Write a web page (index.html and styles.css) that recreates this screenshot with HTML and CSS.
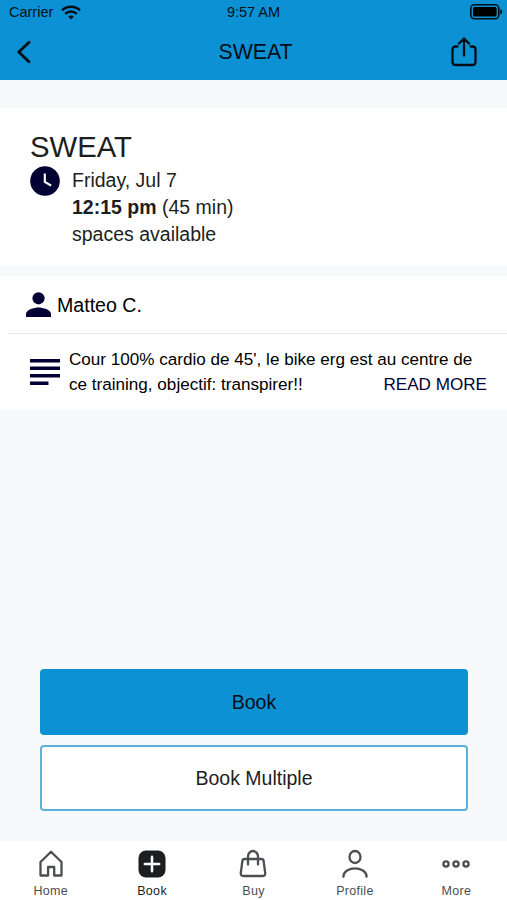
FILE: index.html
```html
<!DOCTYPE html>
<html lang="en">
<head>
    <meta charset="UTF-8">
    <meta name="viewport" content="width=device-width, initial-scale=1.0">
    <title>SWEAT</title>
    <link rel="stylesheet" href="styles.css">
</head>
<body>
    <header class="header">
        <div class="status-bar">
            <div class="carrier">
                <span>Carrier</span>
                <svg width="20" height="15" viewBox="0 0 20 15" fill="none" stroke="#020e16" stroke-width="2.5">
                    <path d="M1 5.3C6 .4 14 .4 19 5.3M4.2 8.8c3.3-3.2 8.3-3.2 11.600 0"/>
                    <path d="M7.200 11.700c1.600-1.500 4-1.500 5.600 0L10 14.500z" fill="#020e16" stroke="none"/>
                </svg>
            </div>
            <span class="time">9:57 AM</span>
            <svg class="battery" width="33" height="16" viewBox="0 0 33 16">
                <rect x=".8" y=".8" width="28" height="13.900" rx="3.600" fill="none" stroke="#020e16" stroke-width="1.600"/>
                <rect x="3" y="3" width="23.600" height="9.500" rx="1.500" fill="#000"/>
                <path d="M30.300 5c2.600.7 2.600 4.800 0 5.500z" fill="#020e16"/>
            </svg>
        </div>
        <div class="nav-bar">
            <svg width="16" height="24" viewBox="0 0 16 24" fill="none" stroke="#020e16" stroke-width="2.900" stroke-linecap="round" stroke-linejoin="round">
                <path d="M13 2.300L2.800 12 13 21.700"/>
            </svg>
            <span class="nav-title">SWEAT</span>
            <svg class="share" width="26" height="30" viewBox="0 0 26 30" fill="none" stroke="#020e16" stroke-width="2.300" stroke-linecap="round" stroke-linejoin="round">
                <path d="M6.500 9.500H4.500Q1.500 9.500 1.500 12.500V25q0 3 3 3h17q3 0 3-3V12.500q0-3-3-3H19.500M13 18.500V1.500M8 6.500l5-5 5 5"/>
            </svg>
        </div>
    </header>

    <section class="class-card">
        <h1>SWEAT</h1>
        <div class="class-info">
            <svg width="30" height="30" viewBox="0 0 30 30">
                <circle cx="15" cy="15" r="14.800" fill="#020033"/>
                <path d="M14.800 7.500v8.300l6.400 3.900" fill="none" stroke="#fff" stroke-width="2.100"/>
            </svg>
            <div class="class-text">
                <p>Friday, Jul 7</p>
                <p><b>12:15 pm</b> (45 min)</p>
                <p>spaces available</p>
            </div>
        </div>
    </section>

    <section class="details">
        <div class="teacher">
            <svg width="25" height="25" viewBox="0 0 25 25" fill="#020033">
                <circle cx="12.500" cy="6.300" r="6.100"/>
                <path d="M0 25v-3.200c0-4.200 8.300-6.400 12.500-6.400S25 17.600 25 21.800V25z"/>
            </svg>
            <span>Matteo C.</span>
        </div>
        <div class="description">
            <svg width="30" height="27" viewBox="0 0 30 27" fill="#020033">
                <path d="M0 0h30v3.500H0zM0 7.500h30V11H0zM0 15h30v3.500H0zM0 22.500h18.500V26H0z"/>
            </svg>
            <div class="description-text">
                <p>Cour 100% cardio de 45', le bike erg est au centre de</p>
                <p class="last-line">ce training, objectif: transpirer!! <a class="read-more">READ MORE</a></p>
            </div>
        </div>
    </section>

    <div class="actions">
        <button class="btn btn-book">Book</button>
        <button class="btn btn-multiple">Book Multiple</button>
    </div>

    <nav class="tab-bar">
        <a class="tab">
            <svg width="30" height="30" viewBox="0 0 30 30">
                <path d="M4.500 13L15 2.800 25.500 13v13.500h-7.300V18h-6.100v8.500H4.500z"/>
            </svg>
            <span>Home</span>
        </a>
        <a class="tab active">
            <svg width="30" height="30" viewBox="0 0 30 30">
                <rect x="1.500" y="1.500" width="27" height="27" rx="7.500" fill="#1d1e22" stroke="none"/>
                <path d="M15 7.800v14.400M7.800 15h14.400" stroke="#fff" stroke-width="2.500"/>
            </svg>
            <span>Book</span>
        </a>
        <a class="tab">
            <svg width="30" height="30" viewBox="0 0 30 30">
                <path d="M6.500 10h17q1.800 0 2.100 1.800L27.200 24q.3 3-2.500 3H5.300q-2.800 0-2.500-3L4.400 11.800Q4.700 10 6.500 10zM10 15.500V7.500a5 5.500 0 0 1 10 0v8"/>
            </svg>
            <span>Buy</span>
        </a>
        <a class="tab">
            <svg width="30" height="30" viewBox="0 0 30 30">
                <ellipse cx="15" cy="8" rx="5.500" ry="6"/>
                <path d="M3.500 27.800V26.500C5 17 25 17 26.500 26.500v1.300"/>
            </svg>
            <span>Profile</span>
        </a>
        <a class="tab">
            <svg width="30" height="30" viewBox="0 0 30 30">
                <circle cx="5" cy="15" r="2.600"/>
                <circle cx="15" cy="15" r="2.600"/>
                <circle cx="25" cy="15" r="2.600"/>
            </svg>
            <span>More</span>
        </a>
    </nav>
</body>
</html>
```
FILE: styles.css
```css
* {
    box-sizing: border-box;
}
body {
    margin: 0;
    height: 900px;
    display: flex;
    flex-direction: column;
    overflow: hidden;
    font-family: "Liberation Sans", Arial, sans-serif;
    background-color: #f7f9fb;
    color: #1d1e20;
}
h1, p {
    margin: 0;
}
svg {
    display: block;
    flex-shrink: 0;
}
.header {
    height: 80px;
    background-color: #0c92d4;
    color: #020e16;
}
.status-bar {
    display: grid;
    grid-template-columns: 1fr auto 1fr;
    align-items: center;
    height: 24px;
    padding: 0 4px 0 9px;
    font-size: 14.5px;
}
.time {
    margin-right: 5px;
}
.carrier {
    display: flex;
    align-items: center;
    gap: 8px;
}
.battery {
    justify-self: end;
}
.nav-bar {
    display: grid;
    grid-template-columns: 1fr auto 1fr;
    align-items: center;
    height: 56px;
    padding: 0 30px 0 16px;
}
.nav-title {
    margin-left: 18px;
    font-size: 21.3px;
}
.share {
    justify-self: end;
}
.class-card {
    height: 158px;
    margin-top: 28px;
    padding: 22px 30px 0;
    background-color: #fff;
}
.class-card h1 {
    font-size: 29.3px;
    font-weight: normal;
    line-height: 34px;
}
.class-info {
    display: flex;
    gap: 12px;
    padding-top: 2px;
}
.class-text {
    padding-top: 1px;
    font-size: 19.5px;
    line-height: 27px;
}
.details {
    margin-top: 10px;
    height: 134px;
    background-color: #fff;
}
.teacher {
    display: flex;
    align-items: center;
    gap: 6px;
    height: 58px;
    margin-left: 8px;
    padding-left: 18px;
    border-bottom: 1px solid #e9eaec;
    font-size: 19.6px;
    color: #000;
}
.teacher span {
    padding-top: 1px;
}
.description {
    display: flex;
    align-items: center;
    gap: 9px;
    height: 76px;
    padding: 0 20px 0 30px;
    font-size: 17.1px;
    line-height: 25px;
    color: #000;
}
.description-text {
    flex: 1;
    padding-bottom: 1px;
    white-space: nowrap;
}
.last-line {
    display: flex;
    justify-content: space-between;
}
.read-more {
    color: #020033;
}
.actions {
    display: flex;
    flex-direction: column;
    gap: 10px;
    margin-top: auto;
    padding: 0 39px 30px 40px;
}
.btn {
    height: 66px;
    border: 2px solid #0c92d4;
    border-radius: 4px;
    font-family: inherit;
    font-size: 19.5px;
}
.btn-book {
    background-color: #0c92d4;
    color: #020e16;
}
.btn-multiple {
    border-color: #5cb1dc;
    background-color: #fff;
    color: #1d1e20;
}
.tab-bar {
    display: grid;
    grid-template-columns: repeat(5, 1fr);
    height: 59px;
    padding-top: 8px;
    background-color: #fff;
}
.tab {
    display: flex;
    flex-direction: column;
    align-items: center;
    gap: 4px;
    font-size: 12.5px;
    line-height: 16px;
    letter-spacing: 0.3px;
    color: #4c4e52;
}
.tab svg {
    fill: none;
    stroke: #4c4e52;
    stroke-width: 2.3;
    stroke-linecap: round;
    stroke-linejoin: round;
}
.active {
    color: #1d1e22;
}
```
